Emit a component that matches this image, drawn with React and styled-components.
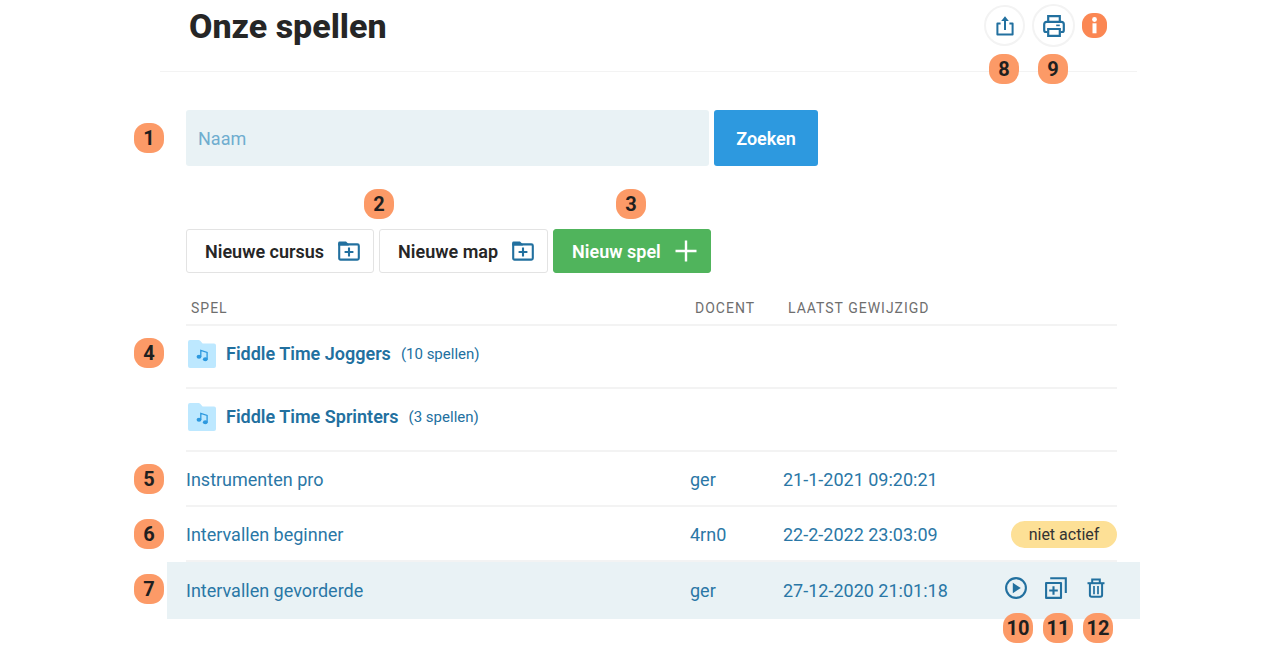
import React from 'react'
import styled, { createGlobalStyle, css } from 'styled-components'

const GlobalStyle = createGlobalStyle`
    * {
        box-sizing: border-box;
    }
    body {
        margin: 0;
        background-color: #fff;
        color: #262626;
        font-family: Roboto, 'Liberation Sans', sans-serif;
    }
`

const Page = styled.div`
    padding: 0 140px 36px 160px;
`

// numbered callouts, they refer to the manual
const Marker = styled.span`
    position: absolute;
    top: ${(p) => p.$top}px;
    left: ${(p) => p.$left}px;
    z-index: 1;
    display: flex;
    align-items: center;
    justify-content: center;
    width: 30px;
    height: 30px;
    border-radius: 13px;
    background-color: #fc9a67;
    color: #1f1f1f;
    font-size: 20px;
    font-weight: 700;
    line-height: 30px;
`
const Spot = styled.div`
    position: relative;
    display: flex;
`

// HEADER
const Header = styled.header`
    display: flex;
    align-items: center;
    justify-content: space-between;
    height: 72px;
    margin-right: 3px;
    padding: 0 30px 20px 29px;
    border-bottom: 1px solid #f3f3f3;
`
const Title = styled.h1`
    margin: 0;
    font-size: 34px;
    line-height: 40px;
    font-weight: 800;
`
const HeaderActions = styled.div`
    display: flex;
    align-items: center;
    gap: 7px;
`
const RoundButton = styled.button`
    display: flex;
    align-items: center;
    justify-content: center;
    width: ${(p) => p.$size}px;
    height: ${(p) => p.$size}px;
    padding: 0;
    border: 2px solid #f3f3f3;
    border-radius: 50%;
    background-color: #fff;
    color: #22709f;
    cursor: pointer;
`
const InfoButton = styled.button`
    display: flex;
    align-items: center;
    justify-content: center;
    width: 25px;
    height: 25px;
    padding: 0;
    border: none;
    border-radius: 11px;
    background-color: #fb8753;
    color: #fff;
    cursor: pointer;
`

// SEARCH
const Content = styled.main`
    padding: 38px 23px 0 26px;
`
const SearchForm = styled.form`
    position: relative;
    display: flex;
    gap: 5px;
    max-width: 632px;
`
const SearchInput = styled.input`
    flex: 1;
    min-width: 0;
    height: 56px;
    padding: 0 12px;
    border: none;
    border-radius: 3px;
    background-color: #e9f2f5;
    color: #22709f;
    font-family: inherit;
    font-size: 18px;

    &::placeholder {
        color: #6fadcf;
        opacity: 1;
    }
`
const SearchButton = styled.button`
    width: 104px;
    border: none;
    border-radius: 3px;
    background-color: #2d99df;
    color: #fff;
    font-family: inherit;
    font-size: 18px;
    font-weight: 600;
    cursor: pointer;
`

// TOOLBAR
const Toolbar = styled.div`
    position: relative;
    display: flex;
    gap: 5px;
    margin-top: 63px;
`
const ToolButton = styled.button`
    display: flex;
    align-items: center;
    gap: 14px;
    height: 44px;
    padding: 0 13px 0 18px;
    border: 1px solid #e3e3e3;
    border-radius: 3px;
    background-color: #fff;
    color: #262626;
    font-family: inherit;
    font-size: 18px;
    font-weight: 600;
    white-space: nowrap;
    cursor: pointer;

    svg {
        color: #22709f;
    }

    ${(p) =>
        p.$primary &&
        css`
            border-color: #50b45c;
            background-color: #50b45c;
            color: #fff;

            svg {
                color: #fff;
            }
        `}
`

// TABLE
const Table = styled.table`
    width: 100%;
    margin-top: 17px;
    border-collapse: separate;
    border-spacing: 0;
    table-layout: fixed;
`
const Col = styled.col`
    width: ${(p) => p.$width};
`
const HeadCell = styled.th`
    height: 36px;
    padding: 1px 0 0 5px;
    border-bottom: 2px solid #f3f3f3;
    color: #6e6e6e;
    font-size: 14px;
    font-weight: 400;
    letter-spacing: 1px;
    text-align: left;
    text-transform: uppercase;
    white-space: nowrap;
`
const Cell = styled.td`
    position: relative;
    height: ${(p) => (p.$folder ? 63 : 55)}px;
    padding: 2px 0 0;
    border-bottom: 2px solid #f3f3f3;
    color: #2a77a6;
    font-size: 18px;
    line-height: 24px;
    white-space: nowrap;
`
const Row = styled.tr`
    ${(p) =>
        p.$active &&
        css`
            ${Cell} {
                height: 57px;
                background-color: #e9f2f5;
                border-bottom-color: #e9f2f5;
            }
            ${Cell}:first-child {
                box-shadow: -19px 0 #e9f2f5;
            }
            ${Cell}:last-child {
                box-shadow: 23px 0 #e9f2f5;
            }
        `}
`
const GameLink = styled.a`
    color: inherit;
    text-decoration: none;
`
const FolderLink = styled.a`
    display: flex;
    align-items: center;
    gap: 10px;
    padding: 0 0 8px 2px;
    color: #22709f;
    font-weight: 600;
    text-decoration: none;
`
const Count = styled.span`
    font-size: 15px;
    font-weight: 400;
`
const Status = styled.span`
    display: block;
    width: 106px;
    margin-left: auto;
    border-radius: 14px;
    background-color: #fde096;
    color: #333;
    font-size: 16px;
    line-height: 27px;
    text-align: center;
`
const RowActions = styled.div`
    display: flex;
    align-items: center;
    justify-content: flex-end;
    gap: 18px;
    padding: 0 10px 6px 0;
`
const IconButton = styled.button`
    display: flex;
    align-items: center;
    justify-content: center;
    width: 22px;
    height: 22px;
    padding: 0;
    border: none;
    background: none;
    color: #22709f;
    cursor: pointer;
`

// ICONS
const ShareIcon = () => (
    <svg width="18" height="20" viewBox="0 0 18 20" fill="none" stroke="currentColor" strokeWidth="2">
        <path d="M4.6 7.4H1.4V18.4H16.6V7.4H13.4" strokeLinejoin="round" />
        <path d="M9 14V3" />
        <path d="M9 .3L12.8 5H5.2Z" fill="currentColor" stroke="none" />
    </svg>
)
const PrintIcon = () => (
    <svg width="22" height="22" viewBox="0 0 22 22" fill="none" stroke="currentColor" strokeWidth="2.2">
        <path d="M5.2 6.5V1.2H16.8V6.5" />
        <path d="M4.5 17H3Q1.2 17 1.2 15.2V9.3Q1.2 6.8 3.7 6.8H18.3Q20.8 6.8 20.8 9.3V15.2Q20.8 17 19 17H17.5" />
        <path d="M5.2 14H16.8V20.8H5.2Z" />
        <path d="M13.2 10.4H16.8" strokeWidth="1.6" />
    </svg>
)
const InfoIcon = () => (
    <svg width="7" height="17" viewBox="0 0 7 17" fill="currentColor">
        <circle cx="3.5" cy="2.5" r="2.4" />
        <path d="M1.5 6.3H5.5V16.3H1.5Z" />
    </svg>
)
const NewFolderIcon = () => (
    <svg width="22" height="20" viewBox="0 0 22 20" fill="none" stroke="currentColor" strokeWidth="2.1">
        <path d="M1.2 3.4H19.4Q20.8 3.4 20.8 4.8V17.2Q20.8 18.6 19.4 18.6H2.6Q1.2 18.6 1.2 17.2Z" />
        <path d="M.2 4.4V1.8Q.2 .4 1.6 .4H8L10.8 3.2V4.4Z" fill="currentColor" stroke="none" />
        <path d="M11 6.6V15.4M6.6 11H15.4" />
    </svg>
)
const PlusIcon = () => (
    <svg width="22" height="22" viewBox="0 0 22 22" fill="none" stroke="currentColor" strokeWidth="2.4">
        <path d="M11 .5V21.5M.5 11H21.5" />
    </svg>
)
const MusicFolderIcon = () => (
    <svg width="28" height="28" viewBox="0 0 28 28">
        <path d="M2 0H10.5Q11.5 0 12.2 .8L14.6 3.4H26Q28 3.4 28 5.4V26Q28 28 26 28H2Q0 28 0 26V2Q0 0 2 0Z" fill="#bde8ff" />
        <g fill="#2d99df">
            <ellipse cx="11" cy="16.8" rx="2.4" ry="2" />
            <ellipse cx="17.3" cy="19.2" rx="2.4" ry="2" />
        </g>
        <path d="M12.8 16.8V10.4L19.1 12.4V19.2" fill="none" stroke="#2d99df" strokeWidth="1.3" />
    </svg>
)
const PlayIcon = () => (
    <svg width="22" height="22" viewBox="0 0 22 22" fill="none" stroke="currentColor" strokeWidth="2.1">
        <circle cx="11" cy="11" r="9.9" />
        <path d="M7.8 5.8L15.8 11L7.8 16.2Z" fill="currentColor" stroke="none" />
    </svg>
)
const DuplicateIcon = () => (
    <svg width="22" height="22" viewBox="0 0 22 22" fill="none" stroke="currentColor" strokeWidth="2.1">
        <path d="M1.1 6H16V20.9H1.1Z" strokeLinejoin="round" />
        <path d="M5.2 1.2H20.8V16" />
        <path d="M8.5 9.2V17.8M4.2 13.5H12.8" />
    </svg>
)
const TrashIcon = () => (
    <svg width="18" height="20" viewBox="0 0 18 20" fill="none" stroke="currentColor" strokeWidth="2">
        <path d="M.5 5.2H17.5" />
        <path d="M5.2 5V1.5H12.8V5" />
        <path d="M2.9 5.2V17Q2.9 18.8 4.7 18.8H13.3Q15.1 18.8 15.1 17V5.2" />
        <path d="M7 8V16.2M11 8V16.2" strokeWidth="1.7" />
    </svg>
)

const folders = [
    { name: 'Fiddle Time Joggers', count: 10, marker: 4 },
    { name: 'Fiddle Time Sprinters', count: 3 },
]

const games = [
    { name: 'Instrumenten pro', teacher: 'ger', changed: '21-1-2021 09:20:21', marker: 5 },
    { name: 'Intervallen beginner', teacher: '4rn0', changed: '22-2-2022 23:03:09', marker: 6, inactive: true },
    { name: 'Intervallen gevorderde', teacher: 'ger', changed: '27-12-2020 21:01:18', marker: 7, active: true },
]

const actions = [
    { label: 'Spelen', icon: <PlayIcon />, marker: 10 },
    { label: 'Dupliceren', icon: <DuplicateIcon />, marker: 11 },
    { label: 'Verwijderen', icon: <TrashIcon />, marker: 12 },
]

const GameRow = ({ game }) => (
    <Row $active={game.active}>
        <Cell>
            <Marker $top={12} $left={-52}>{game.marker}</Marker>
            <GameLink href="#">{game.name}</GameLink>
        </Cell>
        <Cell>{game.teacher}</Cell>
        <Cell>{game.changed}</Cell>
        <Cell>
            {game.inactive && <Status>niet actief</Status>}
            {game.active && (
                <RowActions>
                    {actions.map((a) => (
                        <Spot key={a.label}>
                            <IconButton type="button" aria-label={a.label}>{a.icon}</IconButton>
                            <Marker $top={36} $left={-2}>{a.marker}</Marker>
                        </Spot>
                    ))}
                </RowActions>
            )}
        </Cell>
    </Row>
)

const App = () => {
    return (
        <>
            <GlobalStyle />
            <Page>
                <Header>
                    <Title>Onze spellen</Title>
                    <HeaderActions>
                        <Spot>
                            <RoundButton type="button" aria-label="Delen" $size={41}><ShareIcon /></RoundButton>
                            <Marker $top={49} $left={5}>8</Marker>
                        </Spot>
                        <Spot>
                            <RoundButton type="button" aria-label="Afdrukken" $size={43}><PrintIcon /></RoundButton>
                            <Marker $top={50} $left={6}>9</Marker>
                        </Spot>
                        <InfoButton type="button" aria-label="Informatie"><InfoIcon /></InfoButton>
                    </HeaderActions>
                </Header>

                <Content>
                    <SearchForm onSubmit={(e) => e.preventDefault()}>
                        <Marker $top={13} $left={-52}>1</Marker>
                        <SearchInput type="text" placeholder="Naam" aria-label="Naam" />
                        <SearchButton type="submit">Zoeken</SearchButton>
                    </SearchForm>

                    <Toolbar>
                        <Marker $top={-40} $left={178}>2</Marker>
                        <ToolButton type="button">Nieuwe cursus <NewFolderIcon /></ToolButton>
                        <ToolButton type="button">Nieuwe map <NewFolderIcon /></ToolButton>
                        <Marker $top={-40} $left={430}>3</Marker>
                        <ToolButton type="button" $primary>Nieuw spel <PlusIcon /></ToolButton>
                    </Toolbar>

                    <Table>
                        <colgroup>
                            <Col $width="auto" />
                            <Col $width="93px" />
                            <Col $width="213px" />
                            <Col $width="121px" />
                        </colgroup>
                        <thead>
                            <tr>
                                <HeadCell scope="col">Spel</HeadCell>
                                <HeadCell scope="col">Docent</HeadCell>
                                <HeadCell scope="col">Laatst gewijzigd</HeadCell>
                                <HeadCell as="td" />
                            </tr>
                        </thead>
                        <tbody>
                            {folders.map((f) => (
                                <Row key={f.name}>
                                    <Cell $folder colSpan={4}>
                                        {f.marker && <Marker $top={12} $left={-52}>{f.marker}</Marker>}
                                        <FolderLink href="#">
                                            <MusicFolderIcon />
                                            {f.name}
                                            <Count>({f.count} spellen)</Count>
                                        </FolderLink>
                                    </Cell>
                                </Row>
                            ))}
                            {games.map((g) => (
                                <GameRow key={g.name} game={g} />
                            ))}
                        </tbody>
                    </Table>
                </Content>
            </Page>
        </>
    )
}

export default App
